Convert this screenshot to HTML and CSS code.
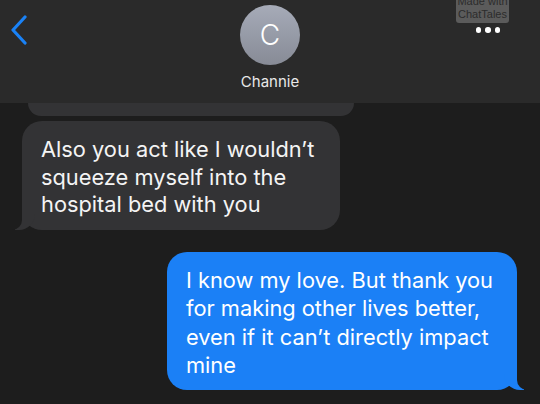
FILE: index.html
```html
<!DOCTYPE html>
<html lang="en">
  <head>
    <meta charset="UTF-8" />
    <meta name="viewport" content="width=device-width, initial-scale=1.0" />
    <title>Channie</title>
    <link rel="stylesheet" href="styles.css">
  </head>
  <body>
    <div class="screen">
      <!-- header -->
      <div class="header">
        <div class="header-left">
          <svg class="back" width="18" height="30" viewBox="0 0 18 30">
            <path d="M15 2 L3 15 L15 28" fill="none" stroke="#1a82f6" stroke-width="3.2" stroke-linecap="round" stroke-linejoin="round" />
          </svg>
        </div>
        <div class="contact">
          <div class="avatar">C</div>
          <div class="name">Channie</div>
        </div>
        <div class="header-right">
          <div class="dots">
            <span class="dot"></span>
            <span class="dot"></span>
            <span class="dot"></span>
          </div>
        </div>
        <div class="watermark">Made with<br />ChatTales</div>
      </div>

      <!-- messages -->
      <div class="messages">
        <div class="bubble received cut"></div>
        <div class="bubble received tail">
          Also you act like I wouldn’t<br />
          squeeze myself into the<br />
          hospital bed with you
        </div>
        <div class="bubble sent tail">
          I know my love. But thank you<br />
          for making other lives better,<br />
          even if it can’t directly impact<br />
          mine
        </div>
      </div>
    </div>
  </body>
</html>
```

FILE: styles.css
```css
:root {
  --bg: #1d1d1d;
  --header: #2a2a2a;
  --gray: #333335;
  --blue: #1b80f6;
  --text: #f4f4f4;
}

* {
  margin: 0;
  padding: 0;
  box-sizing: border-box;
}

body {
  font-family: Inter, "Liberation Sans", Arial, sans-serif;
  background: var(--bg);
  color: var(--text);
  width: 100vw;
  height: 100vh;
  overflow: hidden;
}

.screen {
  display: flex;
  flex-direction: column;
  height: 100%;
}

/* header */
.header {
  position: relative;
  height: 103px;
  background: var(--header);
  display: grid;
  grid-template-columns: 1fr auto 1fr;
  flex-shrink: 0;
}

.header-left {
  padding: 15px 0 0 10px;
}

.back {
  display: block;
}

.contact {
  display: flex;
  flex-direction: column;
  align-items: center;
  padding-top: 5px;
}

.avatar {
  width: 60px;
  height: 60px;
  border-radius: 50%;
  background: linear-gradient(to bottom, #a6abb8, #878b96);
  color: #fff;
  font-size: 28px;
  font-weight: 300;
  display: flex;
  align-items: center;
  justify-content: center;
}

.name {
  margin-top: 7px;
  font-size: 15px;
  line-height: 20px;
  color: #e8e8e8;
}

.header-right {
  display: flex;
  justify-content: flex-end;
}

.dots {
  display: flex;
  gap: 4px;
  margin: 27px 40px 0 0;
  height: 6px;
}

.dot {
  width: 5.5px;
  height: 5.5px;
  border-radius: 50%;
  background: #fff;
}

.watermark {
  position: absolute;
  top: -6px;
  right: 31px;
  width: 53px;
  padding: 1px 0 2px;
  background: #5b5b5b;
  color: #2c2c2c;
  font-family: "Liberation Sans", Arial, sans-serif;
  font-size: 11px;
  line-height: 13px;
  text-align: center;
  border-radius: 3px;
}

/* messages */
.messages {
  display: flex;
  flex-direction: column;
  align-items: flex-start;
}

.bubble {
  position: relative;
  font-size: 21.8px;
  line-height: 27.5px;
  padding: 15px 19px 0;
  border-radius: 20px;
  white-space: nowrap;
}

.received {
  background: var(--gray);
  margin-left: 22px;
}

.cut {
  width: 326px;
  height: 13px;
  margin-left: 28px;
  padding: 0;
  border-radius: 0 0 20px 20px;
}

.received.tail {
  margin-top: 5px;
  width: 318px;
  height: 109px;
}

.sent {
  background: var(--blue);
  color: #fff;
  align-self: flex-end;
  margin: 22px 23px 0 0;
  width: 350px;
  height: 138px;
  line-height: 28.3px;
  padding-top: 14px;
}

/* bubble tails */
.received.tail::before,
.received.tail::after,
.sent::before,
.sent::after {
  content: "";
  position: absolute;
  bottom: 0;
  height: 20px;
}

.received.tail::before {
  left: -7px;
  width: 20px;
  background: var(--gray);
  border-bottom-right-radius: 16px;
}

.received.tail::after {
  left: -10px;
  width: 10px;
  background: var(--bg);
  border-bottom-right-radius: 10px;
}

.sent::before {
  right: -7px;
  width: 20px;
  background: var(--blue);
  border-bottom-left-radius: 16px;
}

.sent::after {
  right: -10px;
  width: 10px;
  background: var(--bg);
  border-bottom-left-radius: 10px;
}
```
